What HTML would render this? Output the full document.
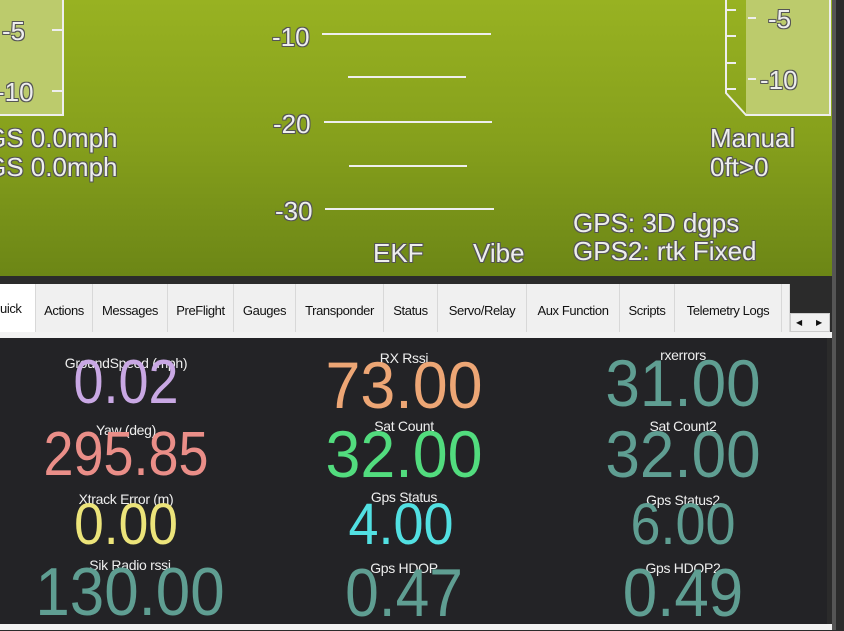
<!DOCTYPE html>
<html><head><meta charset="utf-8"><style>
*{margin:0;padding:0;box-sizing:border-box}
body{width:844px;height:630px;overflow:hidden;background:#2b2b2b;position:relative;font-family:"Liberation Sans",sans-serif}
.hud{position:absolute;left:0;top:0;width:832px;height:276px;background:linear-gradient(#98b222,#86a01c 50%,#6c8616);overflow:hidden}
.t{position:absolute;color:#eee;font-size:26px;white-space:nowrap;line-height:26px;text-shadow:-1px -1px 0 #555,1px -1px 0 #555,-1px 1px 0 #555,1px 1px 0 #555}
.ln{position:absolute;height:2px;background:#eee}
.tabs{position:absolute;left:0;top:284px;height:48px;width:790px;background:#f0f0f0;display:flex}
.tab{height:48px;border-right:1px solid #d8d8d8;font-size:13px;color:#111;line-height:54px;text-align:center;white-space:nowrap;overflow:hidden;letter-spacing:-0.4px}
.panel{position:absolute;left:0;top:338px;width:827px;height:286px;background:#232326}
.lb{position:absolute;width:300px;text-align:center;color:#eee;font-size:14px;line-height:14px;letter-spacing:-0.3px}
.v{position:absolute;width:300px;text-align:center;line-height:1;transform:scaleX(0.87)}
</style></head><body>
<div class="hud">
 <div style="position:absolute;left:0;top:0;width:64px;height:116px;background:#bccb6c;border-right:2px solid #eee;border-bottom:2px solid #eee"></div>
 <div class="ln" style="left:52px;top:29px;width:10px"></div>
 <div class="ln" style="left:52px;top:90px;width:10px"></div>
 <div class="t" style="left:2px;top:18px">-5</div>
 <div class="t" style="left:-4px;top:79px">-10</div>
 <div class="t" style="left:-14px;top:125px">GS 0.0mph</div>
 <div class="t" style="left:-14px;top:154px">GS 0.0mph</div>
 <svg style="position:absolute;left:0;top:0" width="832" height="276">
  <rect x="746" y="0" width="84" height="115" fill="#bccb6c"/>
  <polyline points="726,0 726,93 746,115 830,115 830,0" fill="none" stroke="#eee" stroke-width="2"/>
  <g stroke="#eee" stroke-width="2">
   <line x1="726" y1="10" x2="736" y2="10"/><line x1="726" y1="36" x2="736" y2="36"/><line x1="726" y1="63" x2="736" y2="63"/><line x1="726" y1="89" x2="736" y2="89"/>
   <line x1="748" y1="18" x2="756" y2="18"/><line x1="748" y1="79" x2="756" y2="79"/>
  </g>
 </svg>
 <div class="t" style="left:768px;top:6px">-5</div>
 <div class="t" style="left:760px;top:67px">-10</div>
 <div class="t" style="left:710px;top:125px">Manual</div>
 <div class="t" style="left:710px;top:154px">0ft&gt;0</div>
 <div class="t" style="left:272px;top:24px">-10</div>
 <div class="t" style="left:273px;top:111px">-20</div>
 <div class="t" style="left:275px;top:198px">-30</div>
 <div class="ln" style="left:322px;top:33px;width:169px"></div>
 <div class="ln" style="left:348px;top:76px;width:118px"></div>
 <div class="ln" style="left:324px;top:121px;width:168px"></div>
 <div class="ln" style="left:349px;top:165px;width:118px"></div>
 <div class="ln" style="left:325px;top:208px;width:169px"></div>
 <div class="t" style="left:373px;top:240px">EKF</div>
 <div class="t" style="left:473px;top:240px">Vibe</div>
 <div class="t" style="left:573px;top:210px">GPS: 3D dgps</div>
 <div class="t" style="left:573px;top:238px">GPS2: rtk Fixed</div>
</div>
<div style="position:absolute;left:832px;top:0;width:4px;height:630px;background:#555"></div>
<div class="tabs">
 <div class="tab" style="width:36px;background:#fff;text-align:left;line-height:50px">uick</div>
 <div class="tab" style="width:57px">Actions</div>
 <div class="tab" style="width:75px">Messages</div>
 <div class="tab" style="width:66px">PreFlight</div>
 <div class="tab" style="width:62px">Gauges</div>
 <div class="tab" style="width:88px">Transponder</div>
 <div class="tab" style="width:54px">Status</div>
 <div class="tab" style="width:89px">Servo/Relay</div>
 <div class="tab" style="width:93px">Aux Function</div>
 <div class="tab" style="width:55px">Scripts</div>
 <div class="tab" style="width:107px">Telemetry Logs</div>
 <div class="tab" style="width:8px"></div>
</div>
<div style="position:absolute;left:790px;top:313px;width:40px;height:19px;background:#f0f0f0;border:1px solid #ccc;font-size:8px;line-height:17px;color:#111"><span style="position:absolute;left:5px">◀</span><span style="position:absolute;left:25px">▶</span></div>
<div style="position:absolute;left:0;top:332px;width:832px;height:6px;background:#f2f2f2"></div>
<div class="panel"></div>
<div style="position:absolute;left:0;top:624px;width:832px;height:6px;background:#f2f2f2"></div>

<div class="lb" style="left:-24px;top:356px">GroundSpeed (mph)</div>
<div class="v" style="left:-24px;top:352px;font-size:62px;color:#c9a8e4">0.02</div>
<div class="lb" style="left:254px;top:351px">RX Rssi</div>
<div class="v" style="left:254px;top:352px;font-size:66px;color:#eda675;transform:scaleX(0.95)">73.00</div>
<div class="lb" style="left:533px;top:348px">rxerrors</div>
<div class="v" style="left:533px;top:350px;font-size:66px;color:#5f9e92;transform:scaleX(0.94)">31.00</div>

<div class="lb" style="left:-24px;top:423px">Yaw (deg)</div>
<div class="v" style="left:-24px;top:424px;font-size:62px;color:#ea8e88">295.85</div>
<div class="lb" style="left:254px;top:419px">Sat Count</div>
<div class="v" style="left:254px;top:421px;font-size:66px;color:#52dc7e;transform:scaleX(0.95)">32.00</div>
<div class="lb" style="left:533px;top:419px">Sat Count2</div>
<div class="v" style="left:533px;top:421px;font-size:66px;color:#5f9e92;transform:scaleX(0.94)">32.00</div>

<div class="lb" style="left:-24px;top:492px">Xtrack Error (m)</div>
<div class="v" style="left:-24px;top:496px;font-size:58px;color:#ece47a;transform:scaleX(0.92)">0.00</div>
<div class="lb" style="left:254px;top:490px">Gps Status</div>
<div class="v" style="left:251px;top:496px;font-size:58px;color:#52e0e2;transform:scaleX(0.93)">4.00</div>
<div class="lb" style="left:533px;top:493px">Gps Status2</div>
<div class="v" style="left:533px;top:496px;font-size:58px;color:#5f9e92;transform:scaleX(0.93)">6.00</div>

<div class="lb" style="left:-20px;top:558px">Sik Radio rssi</div>
<div class="v" style="left:-20px;top:558px;font-size:68px;color:#5f9e92;transform:scaleX(0.91)">130.00</div>
<div class="lb" style="left:254px;top:561px">Gps HDOP</div>
<div class="v" style="left:254px;top:559px;font-size:68px;color:#5f9e92;transform:scaleX(0.89)">0.47</div>
<div class="lb" style="left:533px;top:561px">Gps HDOP2</div>
<div class="v" style="left:533px;top:559px;font-size:68px;color:#5f9e92;transform:scaleX(0.91)">0.49</div>
</body></html>
